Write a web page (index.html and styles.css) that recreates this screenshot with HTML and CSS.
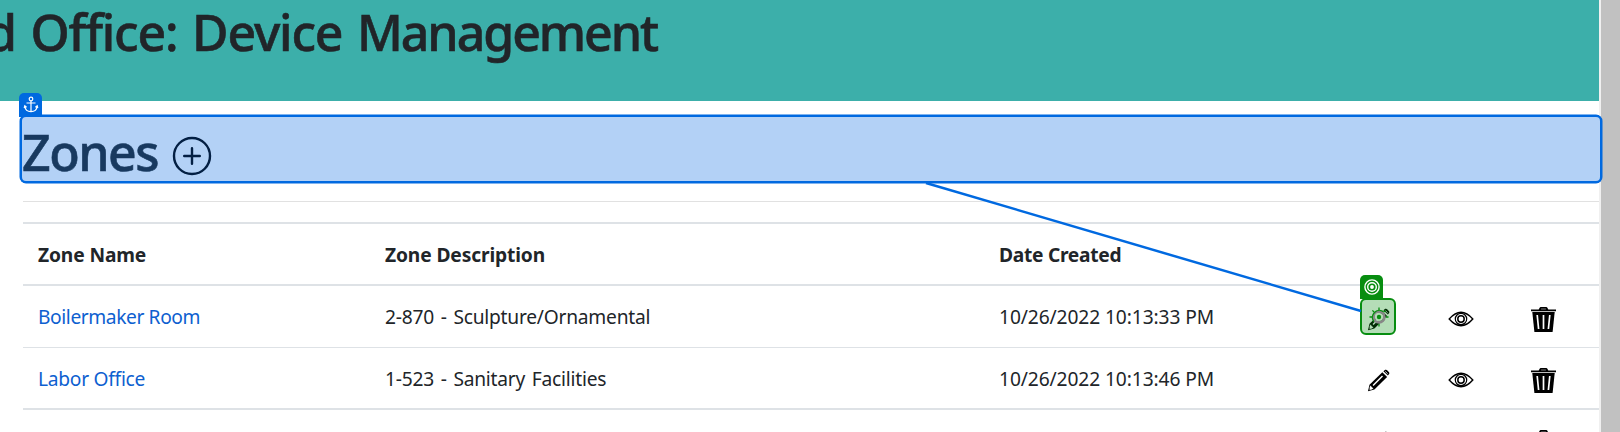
FILE: index.html
```html
<!DOCTYPE html>
<html lang="en">
<head>
<meta charset="utf-8">
<title>Device Management</title>
<link rel="stylesheet" href="styles.css">
</head>
<body>
<svg class="defs" aria-hidden="true">
  <symbol id="pencil" viewBox="0 0 24 24">
    <path d="M1 23.2 2.6 16.5 16 3.4 21 8.3 7.7 21.4Z"/>
    <path d="M17.1 2.4 19 .9Q20.1.3 21 1.2L23 3.3Q23.8 4.3 23 5.3L21.8 6.9Z"/>
    <path d="M6.3 17.2 16.2 7.4" stroke="#fff" stroke-width="1.5"/>
    <path d="M2.8 18.7 3.9 17.3 5 19.1 6.7 20.1 5.1 21.3 2.7 22Z" fill="#fff"/>
    <path d="M19 2.5 21.6 5" stroke="#fff" stroke-width=".8"/>
  </symbol>
  <symbol id="eye" viewBox="0 0 26 16">
    <g fill="none" stroke="#000">
      <path d="M1.2 8Q13-5.5 24.8 8 13 21.5 1.2 8Z" stroke-width="1.4"/>
      <circle cx="13" cy="8" r="5.7" stroke-width="1.2"/>
      <circle cx="13" cy="8" r="3.2" stroke-width="1.5"/>
    </g>
  </symbol>
  <symbol id="trash" viewBox="0 0 25 25">
    <path d="M0 2.6H7.7L8.8.4Q9 0 9.6 0H15.4Q16 0 16.2.4L17.3 2.6H25V4.2H0Z"/>
    <path d="M10.1 2H14.9" stroke="#999" stroke-width=".8"/>
    <path d="M1.3 5H23.7L21.6 25H3.4Z"/>
    <path d="M6.2 8 7.6 22M12.5 8V22M18.8 8 17.4 22" stroke="#fff" stroke-width="1.7"/>
  </symbol>
</svg>
<div class="page">
  <header class="banner"><h1 class="title">d Office: Device <span class="tight">Management</span></h1></header>
  <main class="content">
    <section class="zones">
      <span class="tag anchor"><svg width="16" height="18" viewBox="0 0 16 18" fill="none" stroke="#fff" stroke-width="1.2"><circle cx="8" cy="3" r="1.8"/><path d="M8 4.8V16M3.5 7H12.5M1.7 10Q2.5 15.7 8 15.7T14.3 10M1.2 12 1.8 9.7 3.6 11.2M14.8 12 14.2 9.7 12.4 11.2"/></svg></span>
      <h2 class="heading">Zones</h2>
      <svg class="plus" viewBox="0 0 38 38"><circle cx="19" cy="19" r="18"/><path d="M19 11.2V26.8M11.2 19H26.8"/></svg>
    </section>
    <hr class="rule">
    <div class="table">
      <div class="row head"><b class="c1">Zone Name</b><b class="c2">Zone Description</b><b class="c3">Date Created</b></div>
      <div class="row first">
        <a class="c1">Boilermaker Room</a><span class="c2">2-870 - Sculpture/Ornamental</span><span class="c3">10/26/2022 10:13:33 PM</span>
        <span class="edit"><svg class="pencil"><use href="#pencil"/></svg>
          <span class="target"><span class="tag bullseye"><svg width="16" height="16" viewBox="0 0 16 16" fill="none" stroke="#fff" stroke-width="1.4"><circle cx="8" cy="8" r="7.1"/><circle cx="8" cy="8" r="4.3"/><circle cx="8" cy="8" r="1.2" fill="#fff"/></svg></span>
            <svg class="sight" viewBox="0 0 20 20"><circle cx="10" cy="10" r="5.4" fill="none" stroke="#878787" stroke-width="2.6"/><path d="M4.8 14.6A7 7 0 0 1 14.6 4.8" fill="none" stroke="#078d10" stroke-width="1.4"/><path d="M10 .5V3M.5 10H3M10 17V19.5M17 10H19.5M3.4 3.4 5 5M16.6 3.4 15 5" stroke="#078d10" stroke-width="1.3"/><circle cx="10" cy="10" r="4.1" fill="#b4ddb6"/><circle cx="10" cy="10" r="2.2" fill="#078d10"/></svg>
          </span>
        </span>
        <svg class="eye"><use href="#eye"/></svg><svg class="trash"><use href="#trash"/></svg>
      </div>
      <div class="row second">
        <a class="c1 office">Labor Office</a><span class="c2">1-523 - Sanitary Facilities</span><span class="c3">10/26/2022 10:13:46 PM</span>
        <span class="edit"><svg class="pencil"><use href="#pencil"/></svg></span>
        <svg class="eye"><use href="#eye"/></svg><svg class="trash"><use href="#trash"/></svg>
      </div>
      <div class="row third"><span class="edit"><svg class="pencil"><use href="#pencil"/></svg></span><span class="eye"></span><svg class="trash"><use href="#trash"/></svg></div>
    </div>
  </main>
</div>
<svg class="connector" width="1620" height="432"><path d="M926 183 1361 311" stroke="#0069e0" stroke-width="2.5"/></svg>
</body>
</html>
```
FILE: styles.css
```css
* { box-sizing: border-box; }
body { margin: 0; width: 1620px; height: 432px; overflow: hidden; background: #c1c1c1; font: 19.2px/30px "Noto Sans", "Open Sans", sans-serif; color: #212529; }
.defs { display: none; }
.page { width: 1601px; height: 432px; background: #fff; border-right: 2px solid #f0f0f0; }
.banner { height: 101px; background: #3cafaa; }
.title, .heading { margin: 0; font-size: 50px; font-weight: 500; line-height: 60px; white-space: nowrap; -webkit-text-stroke: .6px currentColor; }
.title { padding-top: 2px; margin-left: -14px; letter-spacing: -1.18px; word-spacing: 2.8px; }
.tight { letter-spacing: -2.05px; }
.content { padding: 14px 0 0 23px; }
.zones { position: relative; display: flex; align-items: center; width: 1582px; height: 68px; margin-left: -3px; padding: 8px 0 0 2px; border: 2px solid #0069e0; border-radius: 6px; background: #b3d1f6; box-shadow: 0 0 0 .5px #0069e0; }
.heading { color: #18395f; letter-spacing: -1.5px; width: 150px; margin-top: -3px; margin-left: -2px; }
.plus { width: 38px; height: 38px; margin: 5px 0 0 1px; overflow: visible; fill: none; stroke: #031f43; stroke-width: 2.4; stroke-linecap: round; }
.tag { position: absolute; display: flex; align-items: center; justify-content: center; width: 23px; height: 24px; border-radius: 5px 5px 0 0; }
.anchor { left: -3px; top: -24px; background: #0069e0; }
.bullseye { left: -2px; top: -25px; background: #078d10; }
.rule { height: 1px; border: 0; margin: 18px 0 20px; background: #e1e1e1; }
.row { display: flex; align-items: center; height: 62px; padding-left: 15px; white-space: nowrap; }
.head { height: 64px; padding-top: 2px; border-top: 2px solid #dee2e6; border-bottom: 2px solid #dee2e6; }
.first { border-bottom: 1px solid #dee2e6; }
.second { padding-top: 1px; border-bottom: 2px solid #dee2e6; }
.c1 { width: 347px; }
.c2 { width: 614px; letter-spacing: -.23px; word-spacing: 2px; }
.c3 { width: 360px; letter-spacing: -.1px; }
.head .c1, .head .c2 { letter-spacing: -.12px; word-spacing: 0; }
.head .c3 { letter-spacing: -.28px; }
a { color: #0d60d0; letter-spacing: -.4px; }
.office { letter-spacing: -.27px; }
.edit { position: relative; display: flex; width: 90px; padding-left: 8px; }
.pencil { width: 23px; height: 23px; margin-top: 5px; }
.target { position: absolute; left: 1px; top: -4.5px; width: 36px; height: 37px; border: 2px solid #078d10; border-radius: 6px; background: rgba(7,141,16,.3); }
.sight { position: absolute; left: 7px; top: 7px; width: 20px; height: 20px; }
.eye { width: 26px; height: 16px; margin: 5px 57px 0 -1px; }
.trash { width: 25px; height: 25px; margin-top: 5px; }
.second .pencil, .second .eye, .second .trash { margin-top: 3px; }
.third { align-items: flex-start; height: 22px; overflow: hidden; padding: 20px 0 0 1336px; }
.third .pencil { margin-top: .5px; }
.third .trash { margin-top: 0; }
.connector { position: absolute; left: 0; top: 0; }
```
